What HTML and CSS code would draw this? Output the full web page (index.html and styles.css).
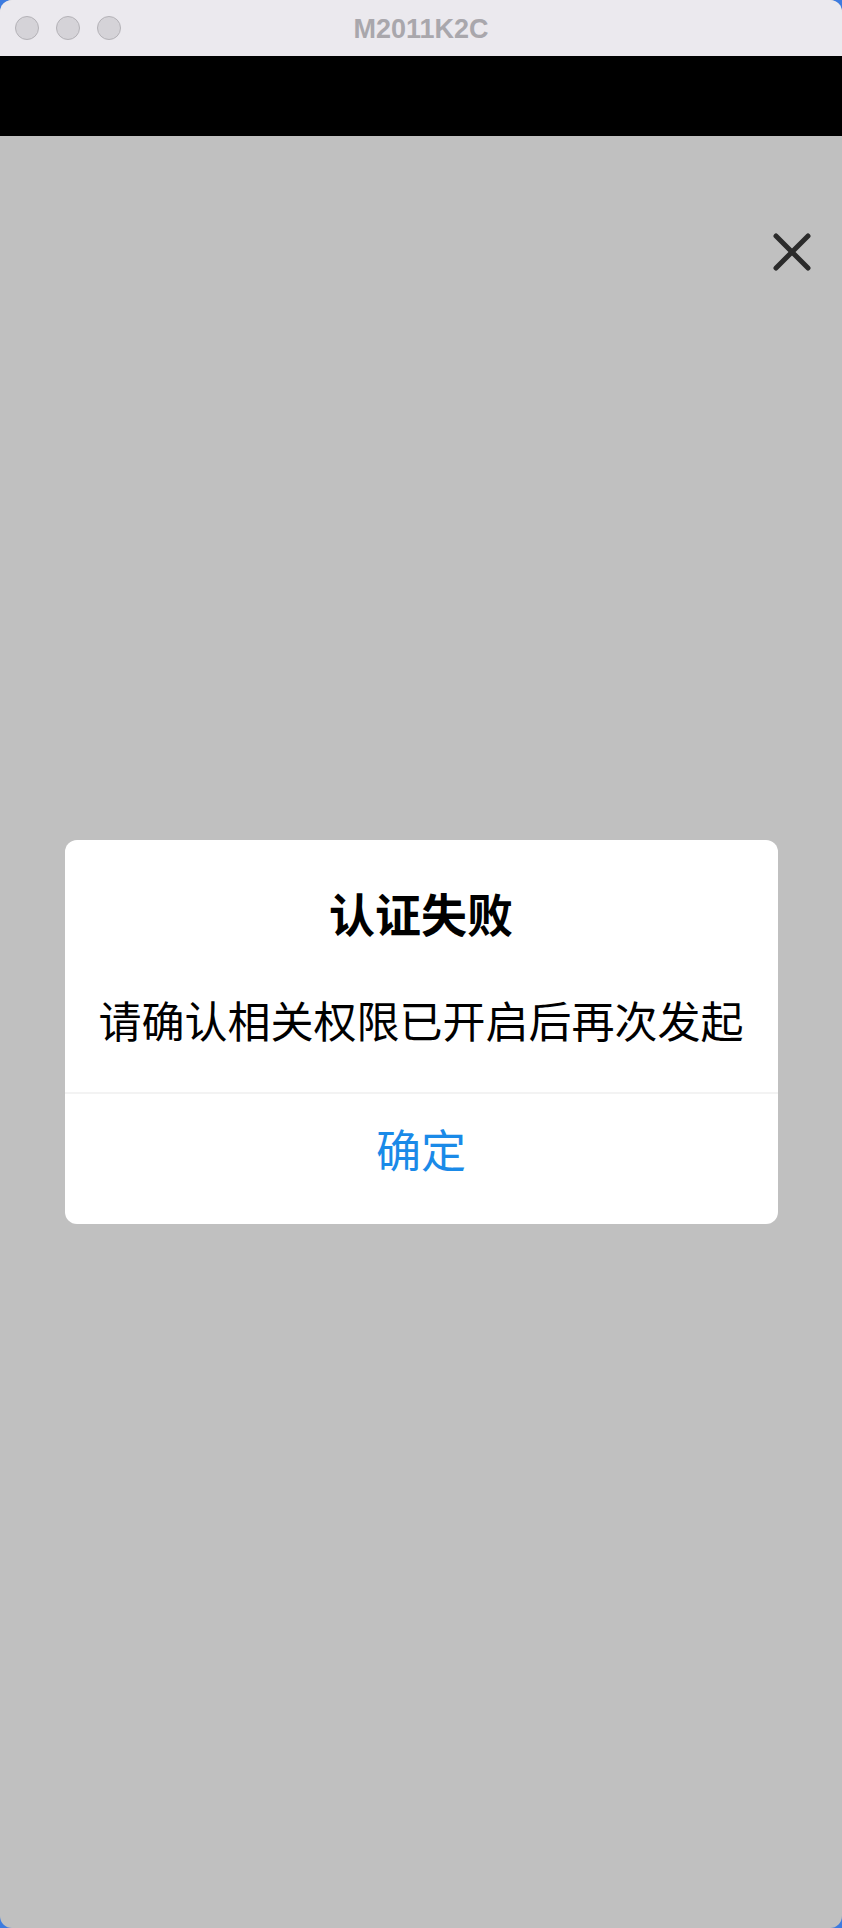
FILE: index.html
```html
<!DOCTYPE html>
<html lang="zh-CN">
<head>
<meta charset="utf-8">
<title>M2011K2C</title>
<link rel="stylesheet" href="styles.css">
</head>
<body>
<div class="window">
  <div class="titlebar">
    <div class="lights">
      <span class="light"></span>
      <span class="light"></span>
      <span class="light"></span>
    </div>
    <div class="title">M2011K2C</div>
  </div>
  <div class="statusbar"></div>
  <div class="content">
    <button class="close" aria-label="关闭">
      <svg width="38" height="38" viewBox="0 0 38 38"><path d="M3 3 L35 35 M35 3 L3 35" stroke="#2b2b2b" stroke-width="5" stroke-linecap="round" fill="none"/></svg>
    </button>
    <div class="dialog">
      <div class="dialog-body">
        <div class="dialog-title">认证失败</div>
        <div class="dialog-msg">请确认相关权限已开启后再次发起</div>
      </div>
      <div class="dialog-btn">确定</div>
    </div>
  </div>
</div>
</body>
</html>
```
FILE: styles.css
```css
html, body {
  margin: 0;
  padding: 0;
}
body {
  background: #3d7be0;
  width: 842px;
  height: 1928px;
  overflow: hidden;
  font-family: "Noto Sans CJK SC", "Liberation Sans", sans-serif;
}
.window {
  width: 842px;
  height: 1928px;
  display: flex;
  flex-direction: column;
  border-radius: 12px;
  overflow: hidden;
  background: #c0c0c0;
}
.titlebar {
  height: 56px;
  flex: none;
  background: #ebe9ee;
  position: relative;
  display: flex;
  align-items: center;
  justify-content: center;
}
.lights {
  position: absolute;
  left: 15px;
  top: 16px;
  display: flex;
  gap: 17px;
}
.light {
  border-radius: 50%;
  background: #d5d3d8;
  border: 1px solid #b4b2b7;
  box-sizing: border-box;
  width: 24px;
  height: 24px;
}
.title {
  font-family: "Liberation Sans", Arial, sans-serif;
  font-weight: bold;
  font-size: 27px;
  color: #a9a7ac;
  margin-top: 2px;
}
.statusbar {
  height: 80px;
  flex: none;
  background: #000;
}
.content {
  flex: 1;
  position: relative;
  display: flex;
  align-items: center;
  justify-content: center;
}
.close {
  position: absolute;
  top: 97px;
  right: 31px;
  width: 38px;
  height: 38px;
  padding: 0;
  border: 0;
  background: none;
  display: block;
}
.close svg {
  display: block;
}
.dialog {
  width: 713px;
  background: #fff;
  border-radius: 12px;
  overflow: hidden;
}
.dialog-body {
  padding: 45px 20px 47px;
  display: flex;
  flex-direction: column;
  align-items: center;
  gap: 53px;
  border-bottom: 2px solid #f3f3f3;
}
.dialog-title {
  font-size: 46px;
  line-height: 55px;
  font-weight: 700;
  color: #000;
}
.dialog-msg {
  font-size: 43px;
  line-height: 52px;
  color: #000;
  white-space: nowrap;
}
.dialog-btn {
  height: 130px;
  display: flex;
  align-items: center;
  justify-content: center;
  font-size: 45px;
  color: #1a8ae8;
  padding-bottom: 22px;
  box-sizing: border-box;
}
```
